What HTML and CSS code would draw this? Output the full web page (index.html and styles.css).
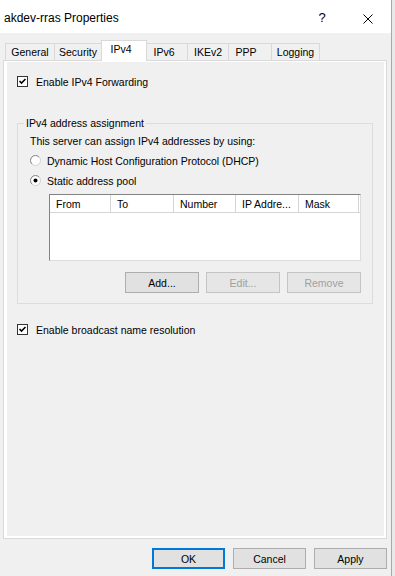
FILE: index.html
```html
<!DOCTYPE html>
<html lang="en">
<head>
<meta charset="UTF-8">
<meta name="viewport" content="width=device-width, initial-scale=1.0">
<title>akdev-rras Properties</title>
<link rel="stylesheet" href="styles.css">
</head>
<body>

<div class="window">
    <div class="titlebar">
        <span class="title">akdev-rras Properties</span>
        <span class="tb-btn help">?</span>
        <span class="tb-btn close">
            <svg width="10" height="10" viewBox="0 0 10 10"><path d="M0.5 0.5 L9.5 9.5 M9.5 0.5 L0.5 9.5" stroke="#000" stroke-width="1" fill="none"/></svg>
        </span>
    </div>

    <div class="sheet">
        <div class="tabs">
            <div class="tab tab-general">General</div>
            <div class="tab tab-security">Security</div>
            <div class="tab tab-ipv4 active">IPv4</div>
            <div class="tab tab-ipv6">IPv6</div>
            <div class="tab tab-ikev2">IKEv2</div>
            <div class="tab tab-ppp">PPP</div>
            <div class="tab tab-logging">Logging</div>
        </div>

        <div class="panel">
            <div class="page">
                <div class="check-row">
                    <span class="checkbox"><svg width="9" height="9" viewBox="0 0 9 9"><path d="M1.5 4 L3.5 6 L7.5 2" stroke="#000" stroke-width="1.6" fill="none"/></svg></span>
                    <span>Enable IPv4 Forwarding</span>
                </div>

                <fieldset class="group">
                    <legend>IPv4 address assignment</legend>
                    <div class="line">This server can assign IPv4 addresses by using:</div>
                    <div class="radio-row first">
                        <svg class="radio" width="11" height="11" viewBox="0 0 11 11">
                            <circle cx="5.5" cy="5.5" r="5" fill="#fff" stroke="#d0d0d0"/>
                            <path d="M1.96 9.04 A5 5 0 0 1 9.04 1.96" stroke="#8a8a8a" fill="none"/>
                        </svg>
                        <span>Dynamic Host Configuration Protocol (DHCP)</span>
                    </div>
                    <div class="radio-row">
                        <svg class="radio" width="11" height="11" viewBox="0 0 11 11">
                            <circle cx="5.5" cy="5.5" r="5" fill="#fff" stroke="#d0d0d0"/>
                            <path d="M1.96 9.04 A5 5 0 0 1 9.04 1.96" stroke="#8a8a8a" fill="none"/>
                            <circle cx="5.5" cy="5.5" r="2" fill="#000"/>
                        </svg>
                        <span>Static address pool</span>
                    </div>

                    <div class="listview">
                        <div class="lv-header">
                            <div class="lv-col col-from">From</div>
                            <div class="lv-col col-to">To</div>
                            <div class="lv-col col-number">Number</div>
                            <div class="lv-col col-ip">IP Addre...</div>
                            <div class="lv-col col-mask">Mask</div>
                        </div>
                    </div>

                    <div class="group-buttons">
                        <button class="btn">Add...</button>
                        <button class="btn" disabled>Edit...</button>
                        <button class="btn" disabled>Remove</button>
                    </div>
                </fieldset>

                <div class="check-row second">
                    <span class="checkbox"><svg width="9" height="9" viewBox="0 0 9 9"><path d="M1.5 4 L3.5 6 L7.5 2" stroke="#000" stroke-width="1.6" fill="none"/></svg></span>
                    <span>Enable broadcast name resolution</span>
                </div>
            </div>
        </div>

        <div class="dialog-buttons">
            <button class="btn dlg default">OK</button>
            <button class="btn dlg">Cancel</button>
            <button class="btn dlg">Apply</button>
        </div>
    </div>
</div>

</body>
</html>
```

FILE: styles.css
```css
body {
    margin: 0;
    padding: 0;
    background-color: #e9e9e9;
    font-family: "Liberation Sans", Arial, sans-serif;
    font-size: 10.5px;
    color: #000;
}

.window {
    width: 391px;
    height: 576px;
    border-right: 1px solid #a8a8a8;
    background-color: #f0f0f0;
    display: flex;
    flex-direction: column;
}

.titlebar {
    height: 33px;
    background-color: #fff;
    display: flex;
    align-items: center;
}

.title {
    flex: 1;
    padding-left: 4px;
    padding-top: 3px;
    font-size: 12px;
}

.tb-btn {
    width: 46px;
    height: 33px;
    display: flex;
    align-items: center;
    justify-content: center;
}

.help {
    font-size: 13px;
    padding-top: 2px;
    box-sizing: border-box;
}

.close {
    padding-top: 4px;
    box-sizing: border-box;
}

.sheet {
    flex: 1;
    display: flex;
    flex-direction: column;
    padding: 7px 4px 7px 3px;
}

/* tabs */
.tabs {
    display: flex;
    align-items: flex-end;
    height: 21px;
    margin-left: 2px;
    position: relative;
    z-index: 1;
}

.tab {
    box-sizing: border-box;
    height: 17px;
    margin-bottom: 1px;
    margin-right: -1px;
    border: 1px solid #d9d9d9;
    border-bottom: none;
    display: flex;
    align-items: center;
    justify-content: center;
}

.tab.active {
    height: 21px;
    margin-bottom: 0;
    padding-bottom: 4px;
    padding-right: 6px;
    background-color: #fff;
    position: relative;
    z-index: 2;
}

.tab-general { width: 50px; }
.tab-security { width: 48px; }
.tab-ipv4 { width: 46px; }
.tab-ipv6 { width: 42px; padding-right: 6px; }
.tab-ikev2 { width: 42px; }
.tab-ppp { width: 44px; padding-right: 8px; }
.tab-logging { width: 49px; }

.panel {
    flex: 1;
    margin-top: -1px;
    border: 1px solid #d9d9d9;
    background-color: #fff;
    padding: 1px 2px 2px 3px;
    display: flex;
}

.page {
    flex: 1;
    background-color: #f0f0f0;
    padding: 13px 11px 0 10px;
}

.check-row {
    display: flex;
    align-items: center;
    height: 13px;
    gap: 8px;
}

.check-row.second {
    margin-top: 19px;
}

.checkbox {
    width: 11px;
    height: 11px;
    box-sizing: border-box;
    border: 1px solid #333;
    background-color: #fff;
    display: flex;
}

/* group box */
.group {
    margin: 29px 0 0 0;
    border: 1px solid #dcdcdc;
    padding: 5px 11px 10px 12px;
}

.group legend {
    margin-left: -6px;
    padding: 0 2px;
    line-height: 13px;
}

.line {
    line-height: 13px;
}

.radio-row {
    display: flex;
    align-items: center;
    height: 13px;
    gap: 6px;
    margin-top: 7px;
}

.radio-row.first {
    margin-top: 6px;
}

.listview {
    margin: 7px 0 0 19px;
    height: 67px;
    box-sizing: border-box;
    background-color: #fff;
    border: 1px solid #828282;
    border-right-color: #dcdcdc;
    border-bottom-color: #dcdcdc;
}

.lv-header {
    display: flex;
    height: 18px;
    box-sizing: border-box;
    border-bottom: 1px solid #d5d5d5;
}

.lv-col {
    box-sizing: border-box;
    border-right: 1px solid #d5d5d5;
    padding-left: 6px;
    display: flex;
    align-items: center;
}

.col-from { width: 61px; }
.col-to { width: 63px; }
.col-number { width: 62px; }
.col-ip { width: 63px; }
.col-mask { width: 60px; }

/* buttons */
.btn {
    width: 74px;
    height: 21px;
    box-sizing: border-box;
    padding: 0;
    border: 1px solid #adadad;
    background-color: #e1e1e1;
    font-family: inherit;
    font-size: 10.5px;
    color: #000;
}

.btn:disabled {
    background-color: #e6e6e6;
    border-color: #c4c4c4;
    color: #a0a0a0;
}

.group-buttons {
    display: flex;
    justify-content: flex-end;
    gap: 7px;
    margin-top: 11px;
}

.dialog-buttons {
    display: flex;
    justify-content: flex-end;
    gap: 8px;
    margin-top: 9px;
}

.btn.dlg {
    width: 73px;
}

.btn.default {
    border-color: #0078d7;
    box-shadow: inset 0 0 0 1px #0078d7;
}
```
